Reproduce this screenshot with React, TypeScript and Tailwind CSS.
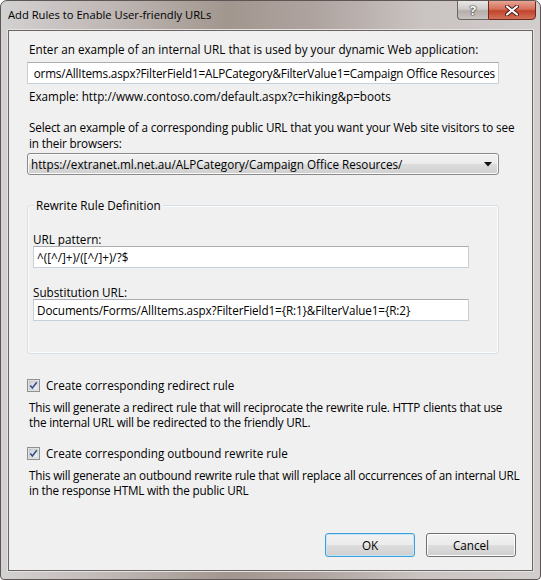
import React from 'react';

const font = { fontFamily: '"Segoe UI", "Open Sans", sans-serif' };

function CheckBox() {
  return (
    <svg width="13" height="13" viewBox="0 0 13 13" className="shrink-0">
      <defs>
        <linearGradient id="cbg" x1="0" y1="0" x2="1" y2="1">
          <stop offset="0" stopColor="#cbcfd5" />
          <stop offset="1" stopColor="#f6f6f6" />
        </linearGradient>
      </defs>
      <rect x="0.5" y="0.5" width="12" height="12" fill="#f4f4f4" stroke="#8e8f8f" />
      <rect x="2" y="2" width="9" height="9" fill="url(#cbg)" stroke="#b0b4ba" strokeWidth="0.6" />
      <path d="M3.3 6.4 L5.4 9 L9.8 3.2" fill="none" stroke="#3a4e8c" strokeWidth="1.6" />
    </svg>
  );
}

function TextBox({ value, className, right }: { value: string; className: string; right?: boolean }) {
  return (
    <div
      className={`h-[22px] bg-white border border-[#c7d0d9] border-t-[#abadb3] flex items-center px-[3px] overflow-hidden whitespace-nowrap text-black ${
        right ? 'justify-end' : ''
      } ${className}`}
    >
      <span className="shrink-0">{value}</span>
    </div>
  );
}

function Button({ label, primary }: { label: string; primary?: boolean }) {
  return (
    <div
      className={`w-[90px] h-[24px] rounded-[3px] border flex items-center justify-center text-black bg-[linear-gradient(#f2f2f2_0%,#ebebeb_50%,#dddddd_51%,#cfcfcf_100%)] ${
        primary
          ? 'border-[#3c9fd8] shadow-[inset_0_0_0_1px_#c4e6fb]'
          : 'border-[#707070] shadow-[inset_0_0_0_1px_#fcfcfc]'
      }`}
    >
      {label}
    </div>
  );
}

export default function App() {
  return (
    <div
      style={font}
      className="w-[541px] h-[580px] flex flex-col rounded-t-[7px] rounded-b-[4px] border border-[#5d5654] bg-[linear-gradient(to_right,#d3d1d1_0%,#bdb5b2_22%,#a2978f_42%,#aea39f_58%,#c9c3c1_78%,#d2cecd_100%)] overflow-hidden"
    >
      {/* title bar */}
      <div className="h-[29px] shrink-0 flex items-start relative">
        <div className="pl-[7px] pt-[6px] text-[11.2px] text-black leading-[16px]">
          Add Rules to Enable User-friendly URLs
        </div>
        <div className="absolute top-[-1px] right-[4px] flex">
          <div className="w-[31px] h-[20px] rounded-bl-[4px] border border-[#6c6462] border-r-0 bg-[linear-gradient(#e9e7e7_0%,#cfcbca_45%,#b5adab_55%,#c9c3c1_100%)] flex items-center justify-center">
            <span
              className="text-[13px] font-bold text-white leading-none"
              style={{ textShadow: '0 0 1px #333, 0 0 1px #333, 0 0 2px #444' }}
            >
              ?
            </span>
          </div>
          <div className="w-[48px] h-[20px] rounded-br-[4px] border border-[#6b2a1e] bg-[linear-gradient(#e8a493_0%,#d4705a_45%,#c1442b_55%,#d4715a_100%)] flex items-center justify-center">
            <svg width="14" height="11" viewBox="0 0 14 11">
              <path d="M2 1.5 L12 9.5 M12 1.5 L2 9.5" stroke="#4a1a12" strokeWidth="4" strokeLinecap="round" />
              <path d="M2 1.5 L12 9.5 M12 1.5 L2 9.5" stroke="#ffffff" strokeWidth="2.2" strokeLinecap="round" />
            </svg>
          </div>
        </div>
      </div>

      {/* client area */}
      <div className="mx-[7px] flex-1 border border-[#6a6462] bg-[#f0f0f0] shadow-[0_0_0_1px_#e6e2e1] flex flex-col px-[18px] pt-[10px] text-[11.7px] text-black leading-[16px]">
        <div className="pl-[2px]">Enter an example of an internal URL that is used by your dynamic Web application:</div>
        <TextBox
          right
          className="mt-[5px] w-[472px] tracking-[-0.15px]"
          value="orms/AllItems.aspx?FilterField1=ALPCategory&FilterValue1=Campaign Office Resources"
        />
        <div className="mt-[4px] pl-[2px]">Example: http://www.contoso.com/default.aspx?c=hiking&amp;p=boots</div>

        <div className="mt-[15px] pl-[2px] whitespace-nowrap tracking-[-0.15px]">
          <div>Select an example of a corresponding public URL that you want your Web site visitors to see</div>
          <div>in their browsers:</div>
        </div>
        <div className="mt-[2px] w-[472px] h-[22px] rounded-[3px] border border-[#8a8a8a] bg-[linear-gradient(#f2f2f2_0%,#ebebeb_50%,#dddddd_51%,#cfcfcf_100%)] shadow-[inset_0_0_0_1px_#fafafa] flex items-center pl-[3px] pr-[6px]">
          <span className="flex-1 whitespace-nowrap overflow-hidden">
            https://extranet.ml.net.au/ALPCategory/Campaign Office Resources/
          </span>
          <svg width="8" height="5" viewBox="0 0 8 5">
            <path d="M0 0 H8 L4 4.5 Z" fill="#111" />
          </svg>
        </div>

        {/* group box */}
        <div className="mt-[30px] w-[472px] h-[149px] rounded-[3px] border border-[#d5dfe5] shadow-[inset_0_0_0_1px_#fbfbfb] relative flex flex-col px-[5px]">
          <div className="absolute left-[6px] top-[-9px] px-[2px] bg-[#f0f0f0]">Rewrite Rule Definition</div>
          <div className="mt-[25px]">URL pattern:</div>
          <TextBox className="mt-[-1px] w-[436px]" value="^([^/]+)/([^/]+)/?$" />
          <div className="mt-[16px]">Substitution URL:</div>
          <TextBox
            className="mt-[-1px] w-[436px] tracking-[-0.1px]"
            value="Documents/Forms/AllItems.aspx?FilterField1={R:1}&FilterValue1={R:2}"
          />
        </div>

        <div className="mt-[23px] flex items-center gap-[6px]">
          <CheckBox />
          <span>Create corresponding redirect rule</span>
        </div>
        <div className="mt-[7px] pl-[2px] whitespace-nowrap tracking-[-0.2px] leading-[15px]">
          <div>This will generate a redirect rule that will reciprocate the rewrite rule. HTTP clients that use</div>
          <div>the internal URL will be redirected to the friendly URL.</div>
        </div>

        <div className="mt-[15px] flex items-center gap-[6px]">
          <CheckBox />
          <span>Create corresponding outbound rewrite rule</span>
        </div>
        <div className="mt-[7px] pl-[2px] whitespace-nowrap tracking-[-0.2px] leading-[15px]">
          <div>This will generate an outbound rewrite rule that will replace all occurrences of an internal URL</div>
          <div>in the response HTML with the public URL</div>
        </div>

        <div className="mt-auto mb-[13px] flex justify-end gap-[11px] mr-[-2px]">
          <Button label="OK" primary />
          <Button label="Cancel" />
        </div>
      </div>
      <div className="h-[8px] shrink-0" />
    </div>
  );
}
